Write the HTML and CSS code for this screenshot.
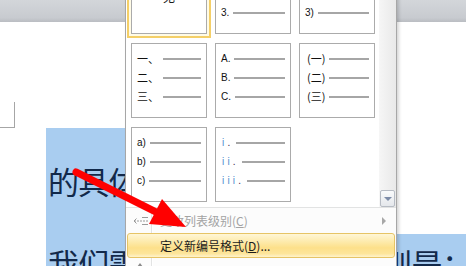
FILE: index.html
```html
<!DOCTYPE html>
<html lang="zh-CN">
<head>
<meta charset="utf-8">
<title>定义新编号格式</title>
<link rel="stylesheet" href="styles.css">
</head>
<body>
<div class="screen">
  <div class="topbar"></div>
  <div class="doc">
    <div class="cropmark"></div>
    <p class="sel sel-first">的具体实施步骤如下</p>
    <p class="sel sel-second">我们需要注意的第一个原则是：</p>
  </div>

  <div class="menu">
    <div class="gallery">
      <div class="grid">
        <div class="cell selected"><span class="none-label">无</span></div>
        <div class="cell">
          <div class="row"><span class="lbl">1.</span><span class="rule"></span></div>
          <div class="row"><span class="lbl">2.</span><span class="rule"></span></div>
          <div class="row"><span class="lbl">3.</span><span class="rule"></span></div>
        </div>
        <div class="cell">
          <div class="row"><span class="lbl">1)</span><span class="rule"></span></div>
          <div class="row"><span class="lbl">2)</span><span class="rule"></span></div>
          <div class="row"><span class="lbl">3)</span><span class="rule"></span></div>
        </div>

        <div class="cell">
          <div class="row"><span class="lbl cjk">一、</span><span class="rule"></span></div>
          <div class="row"><span class="lbl cjk">二、</span><span class="rule"></span></div>
          <div class="row"><span class="lbl cjk">三、</span><span class="rule"></span></div>
        </div>
        <div class="cell">
          <div class="row"><span class="lbl">A.</span><span class="rule"></span></div>
          <div class="row"><span class="lbl">B.</span><span class="rule"></span></div>
          <div class="row"><span class="lbl">C.</span><span class="rule"></span></div>
        </div>
        <div class="cell cell-paren">
          <div class="row"><span class="lbl cjk">(一)</span><span class="rule"></span></div>
          <div class="row"><span class="lbl cjk">(二)</span><span class="rule"></span></div>
          <div class="row"><span class="lbl cjk">(三)</span><span class="rule"></span></div>
        </div>

        <div class="cell">
          <div class="row"><span class="lbl">a)</span><span class="rule"></span></div>
          <div class="row"><span class="lbl">b)</span><span class="rule"></span></div>
          <div class="row"><span class="lbl">c)</span><span class="rule"></span></div>
        </div>
        <div class="cell cell-roman">
          <div class="row"><span class="lbl"><span class="roman">i</span><span class="dot">.</span></span><span class="rule"></span></div>
          <div class="row"><span class="lbl"><span class="roman">ii</span><span class="dot">.</span></span><span class="rule"></span></div>
          <div class="row"><span class="lbl"><span class="roman">iii</span><span class="dot">.</span></span><span class="rule"></span></div>
        </div>
      </div>
      <div class="scroll">
        <div class="scroll-btn">
          <svg width="8" height="4" viewBox="0 0 8 4"><polygon points="0,0 8,0 4,4" fill="#7d8ca8"/></svg>
        </div>
      </div>
    </div>

    <div class="items">
      <div class="item disabled">
        <span class="icon">
          <svg width="15" height="10" viewBox="0 0 15 10">
            <path d="M9 1.5H15M9 8.5H15" stroke="#9a9a9a" stroke-width="1" fill="none"/>
            <path d="M1 5H15" stroke="#9a9a9a" stroke-width="1" stroke-dasharray="2 1" fill="none"/>
            <path d="M3.5 2.5L1 5L3.5 7.5" stroke="#9a9a9a" stroke-width="1" fill="none"/>
          </svg>
        </span>
        <span class="label">更改列表级别(<u>C</u>)</span>
        <span class="sub"></span>
      </div>
      <div class="item hot">
        <span class="icon"></span>
        <span class="label">定义新编号格式(<u>D</u>)...</span>
      </div>
      <div class="item item-next">
        <span class="icon">
          <svg width="16" height="22" viewBox="0 0 16 22">
            <polygon points="5,4 8,0 11,4" fill="#8a8a8a"/>
            <rect x="7" y="4" width="2" height="12" fill="#8a8a8a"/>
          </svg>
        </span>
        <span class="label">设置编号值(<u>V</u>)...</span>
      </div>
    </div>
  </div>

  <svg class="pointer" width="466" height="266" viewBox="0 0 466 266">
    <line x1="76" y1="172" x2="158" y2="213" stroke="#ff0000" stroke-width="7" stroke-linecap="round"/>
    <polygon points="162,199 149,224 186,227" fill="#ff0000"/>
  </svg>
</div>
</body>
</html>
```

FILE: styles.css
```css
* { box-sizing: border-box; }
html, body { margin: 0; padding: 0; }
body {
  width: 466px;
  height: 266px;
  overflow: hidden;
  background: #ffffff;
  font-family: "Noto Sans CJK SC", "Noto Sans", sans-serif;
}
.screen {
  position: relative;
  width: 466px;
  height: 266px;
  overflow: hidden;
}
.topbar {
  height: 22px;
  background: linear-gradient(#d3d6da, #c8cbd0 80%, #babdc2);
}
.doc { background: #ffffff; }
.cropmark {
  margin-top: 80px;
  width: 15px;
  height: 26px;
  border-right: 1px solid #a6a6a6;
  border-bottom: 1px solid #a6a6a6;
}
.sel {
  margin: 0 0 0 46px;
  padding-left: 2px;
  background: #a9cdf0;
  overflow: hidden;
  white-space: nowrap;
  font-family: "Noto Sans CJK SC", sans-serif;
  font-size: 31px;
  line-height: 31px;
  letter-spacing: -0.7px;
  color: #12294a;
}
.sel-first { width: 340px; height: 106px; padding-top: 37px; }
.sel-second { width: 420px; height: 40px; padding-top: 13px; }

/* popup menu */
.menu {
  position: absolute;
  left: 125px;
  top: -46px;
  width: 272px;
  height: 330px;
  background: #fcfcfc;
  border: 1px solid #a7a7a7;
  box-shadow: 2px 2px 3px rgba(0, 0, 0, 0.16);
}
.gallery {
  display: flex;
  background: #ffffff;
  border-bottom: 1px solid #e2e3e3;
}
.grid {
  display: grid;
  grid-template-columns: repeat(3, 76px);
  grid-auto-rows: 75px;
  column-gap: 8px;
  row-gap: 9px;
  padding: 4px 4px 5px 5px;
}
.cell {
  border: 1px solid #ababab;
  background: #ffffff;
  padding: 5px 5px 0 5px;
  display: flex;
  flex-direction: column;
}
.cell.selected {
  justify-content: center;
  align-items: center;
  padding: 0;
  box-shadow: 0 0 0 2px #fffbe6, 0 0 0 4px #f4cf68;
}
.none-label { font-size: 12px; color: #1a1a1a; }
.cell-paren .row { padding-left: 2px; }
.cell-roman .row { padding-left: 1px; }
.row {
  height: 19px;
  display: flex;
  align-items: center;
  gap: 4px;
}
.lbl {
  font-family: "Liberation Sans", Arial, sans-serif;
  font-size: 10px;
  line-height: 10px;
  color: #111111;
  white-space: nowrap;
}
.lbl.cjk {
  font-family: "Noto Sans CJK SC", sans-serif;
  font-size: 11px;
  line-height: 11px;
}
.roman {
  color: #4f8fcf;
  letter-spacing: 3.2px;
}
.dot { color: #3a2a4a; margin-right: 2px; }
.rule {
  flex: 1;
  height: 2px;
  background: #a6a6a6;
}
.scroll {
  width: 17px;
  display: flex;
  flex-direction: column;
  justify-content: flex-end;
  background: linear-gradient(to right, #f6f6f6, #e9e9e9);
}
.scroll-btn {
  height: 17px;
  margin: 0 1px;
  border: 1px solid #b7bcc4;
  border-radius: 2px;
  background: linear-gradient(#fafbfc, #e4e7eb);
  display: flex;
  align-items: center;
  justify-content: center;
}

.items {
  background: linear-gradient(to right, transparent 25px, #e2e3e3 25px, #e2e3e3 26px, #ffffff 26px, #ffffff 27px, transparent 27px);
}
.item {
  height: 25px;
  margin: 0 1px;
  border: 1px solid transparent;
  border-radius: 3px;
  display: flex;
  align-items: center;
  font-size: 12px;
  color: #1b1b1b;
  white-space: nowrap;
}
.item-next { margin-top: 3px; }
.icon {
  width: 24px;
  height: 100%;
  display: flex;
  align-items: center;
  justify-content: center;
}
.label { padding-left: 8px; }
.item.disabled { color: #a3a3a3; }
.item.hot {
  border-color: #e6c466;
  background: linear-gradient(#fff6d6, #fde8a4 40%, #fde08a 60%, #fde59b 85%, #fff3cc);
}
.sub {
  margin-left: auto;
  margin-right: 8px;
  width: 0;
  height: 0;
  border-left: 4px solid #a8a8a8;
  border-top: 4px solid transparent;
  border-bottom: 4px solid transparent;
}

.pointer {
  position: absolute;
  left: 0;
  top: 0;
  pointer-events: none;
}
```
